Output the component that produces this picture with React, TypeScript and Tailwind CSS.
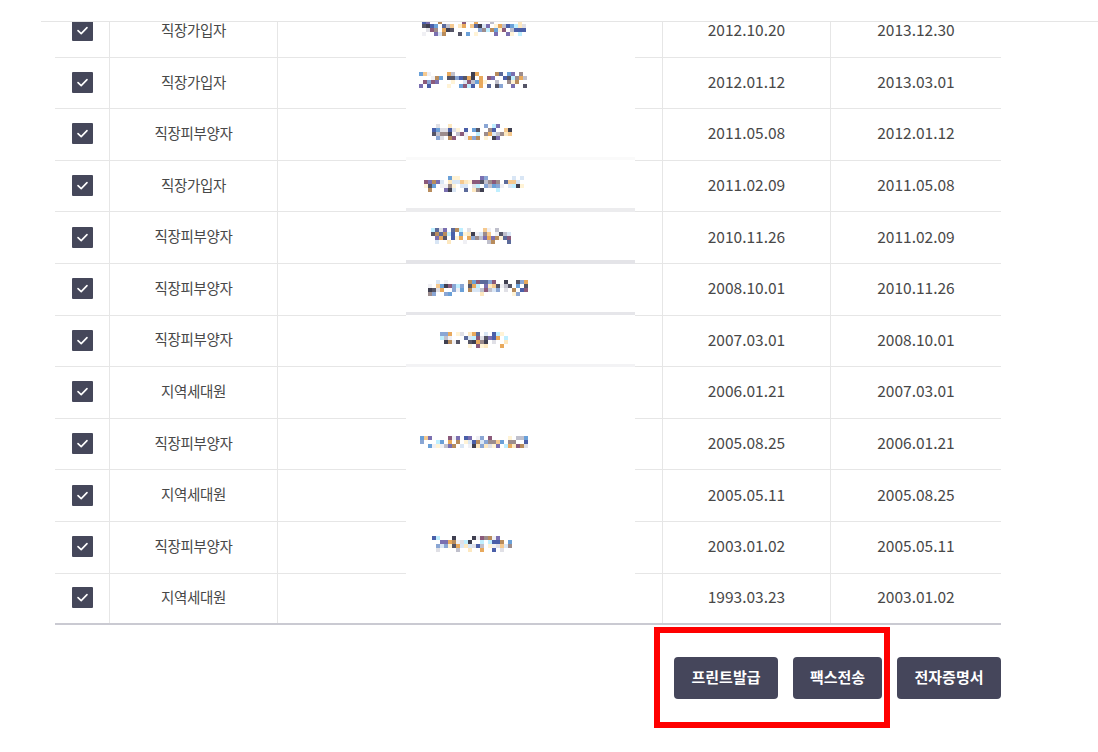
import React from 'react';

const rows = [
  ['직장가입자', '2012.10.20', '2013.12.30'],
  ['직장가입자', '2012.01.12', '2013.03.01'],
  ['직장피부양자', '2011.05.08', '2012.01.12'],
  ['직장가입자', '2011.02.09', '2011.05.08'],
  ['직장피부양자', '2010.11.26', '2011.02.09'],
  ['직장피부양자', '2008.10.01', '2010.11.26'],
  ['직장피부양자', '2007.03.01', '2008.10.01'],
  ['지역세대원', '2006.01.21', '2007.03.01'],
  ['직장피부양자', '2005.08.25', '2006.01.21'],
  ['지역세대원', '2005.05.11', '2005.08.25'],
  ['직장피부양자', '2003.01.02', '2005.05.11'],
  ['지역세대원', '1993.03.23', '2003.01.02'],
];

// blurred (mosaic) blocks in the censored column
const palette = [
  '#8aa6d4', '#9c8c8c', '#555566', '#f5c98f', '#7a6fb0', '#5b6a9a', '#fde8c0', '#8b5a7a',
  '#3f3f50', '#c0c0cc', '#d9e6f5', '#bfefff', '#e8a95c', '#6aa0d8', '#b88c5c', '#e0e0e6',
  '#fff3d6', '#4a5fa8', '#f0f0f4',
];

const mosaics = [
  { x: 16, y: 20, c: 26, r: 4 },
  { x: 13, y: 72, c: 27, r: 4 },
  { x: 26, y: 124, c: 20, r: 4 },
  { x: 14, y: 176, c: 26, r: 4 },
  { x: 25, y: 228, c: 20, r: 4 },
  { x: 22, y: 280, c: 25, r: 4 },
  { x: 34, y: 332, c: 17, r: 4 },
  { x: 14, y: 436, c: 27, r: 3 },
  { x: 26, y: 536, c: 20, r: 4 },
];

const bands = [
  { y: 157, h: 3, fill: '#fafafa' },
  { y: 208, h: 4, fill: '#ececee' },
  { y: 260, h: 4, fill: '#e4e4e8' },
  { y: 312, h: 3, fill: '#e6e6ea' },
  { y: 364, h: 3, fill: '#f3f3f5' },
];

function buildBlocks() {
  let seed = 7;
  const rnd = () => {
    seed = (seed * 16807) % 2147483647;
    return seed / 2147483647;
  };
  const out: { x: number; y: number; fill: string }[] = [];
  mosaics.forEach((m) => {
    for (let j = 0; j < m.r; j++) {
      for (let i = 0; i < m.c; i++) {
        const p = j === 1 || j === 2 ? 0.75 : 0.45;
        if (rnd() < p) {
          out.push({ x: m.x + i * 4, y: m.y + j * 4, fill: palette[Math.floor(rnd() * palette.length)] });
        }
      }
    }
  });
  return out;
}

const blocks = buildBlocks();

const Checkbox = () => (
  <span className="flex h-[21px] w-[21px] items-center justify-center rounded-[1px] bg-[#45475a]">
    <svg width="21" height="21" viewBox="0 0 21 21">
      <polyline points="6,10.6 9.2,13.6 15,7.6" fill="none" stroke="#fff" strokeWidth="1.6" strokeLinecap="round" strokeLinejoin="round" />
    </svg>
  </span>
);

export default function App() {
  return (
    <div
      className="relative h-[752px] w-[1098px] overflow-hidden bg-white text-[#484848]"
      style={{ fontFamily: '"Noto Sans CJK KR", "Noto Sans", sans-serif' }}
    >
      {/* table */}
      <div className="ml-[55px] mt-[6px] w-[946px]">
        {rows.map((r, i) => (
          <div
            key={i}
            className={`grid h-[51.6px] grid-cols-[55px_168px_385px_168px_170px] ${
              i === rows.length - 1 ? 'border-b-2 border-[#cacad2]' : 'border-b border-[#e6e6e6]'
            }`}
          >
            <div className="flex items-center justify-center border-r border-[#e6e6e6] pb-px">
              <Checkbox />
            </div>
            <div className="flex items-center justify-center border-r border-[#e6e6e6] pb-[3px] text-[14.5px] tracking-[-0.3px]">{r[0]}</div>
            <div className="border-r border-[#e6e6e6]" />
            <div className="flex items-center justify-center border-r border-[#e6e6e6] pb-[3px] text-[15.5px]">{r[1]}</div>
            <div className="flex items-center justify-center pb-[3px] text-[15.5px]">{r[2]}</div>
          </div>
        ))}

        {/* actions */}
        <div className="mt-[32px] flex justify-end gap-[15px]">
          <button className="h-[42px] w-[104px] rounded-[4px] bg-[#45465b] pb-px text-[15px] font-bold text-white">프린트발급</button>
          <button className="h-[42px] w-[89px] rounded-[4px] bg-[#45465b] pb-px text-[15px] font-bold text-white">팩스전송</button>
          <button className="h-[42px] w-[104px] rounded-[4px] bg-[#45465b] pb-px text-[15px] font-bold text-white">전자증명서</button>
        </div>
      </div>

      {/* censored column overlay */}
      <svg className="absolute left-[406px] top-0" width="229" height="621" viewBox="0 0 229 621">
        <rect x="0" y="0" width="229" height="621" fill="#fff" />
        {bands.map((b, i) => (
          <rect key={i} x="0" y={b.y} width="229" height={b.h} fill={b.fill} />
        ))}
        {blocks.map((b, i) => (
          <rect key={i} x={b.x} y={b.y} width="4" height="4" fill={b.fill} />
        ))}
      </svg>

      {/* top bar */}
      <div className="absolute left-0 top-0 h-[22px] w-full bg-white">
        <div className="ml-[41px] mt-[21px] h-px bg-[#e5e5e5]" />
      </div>

      {/* highlight */}
      <div className="absolute left-[654px] top-[627px] h-[101px] w-[236px] border-[6px] border-[#ff0000]" />
    </div>
  );
}
